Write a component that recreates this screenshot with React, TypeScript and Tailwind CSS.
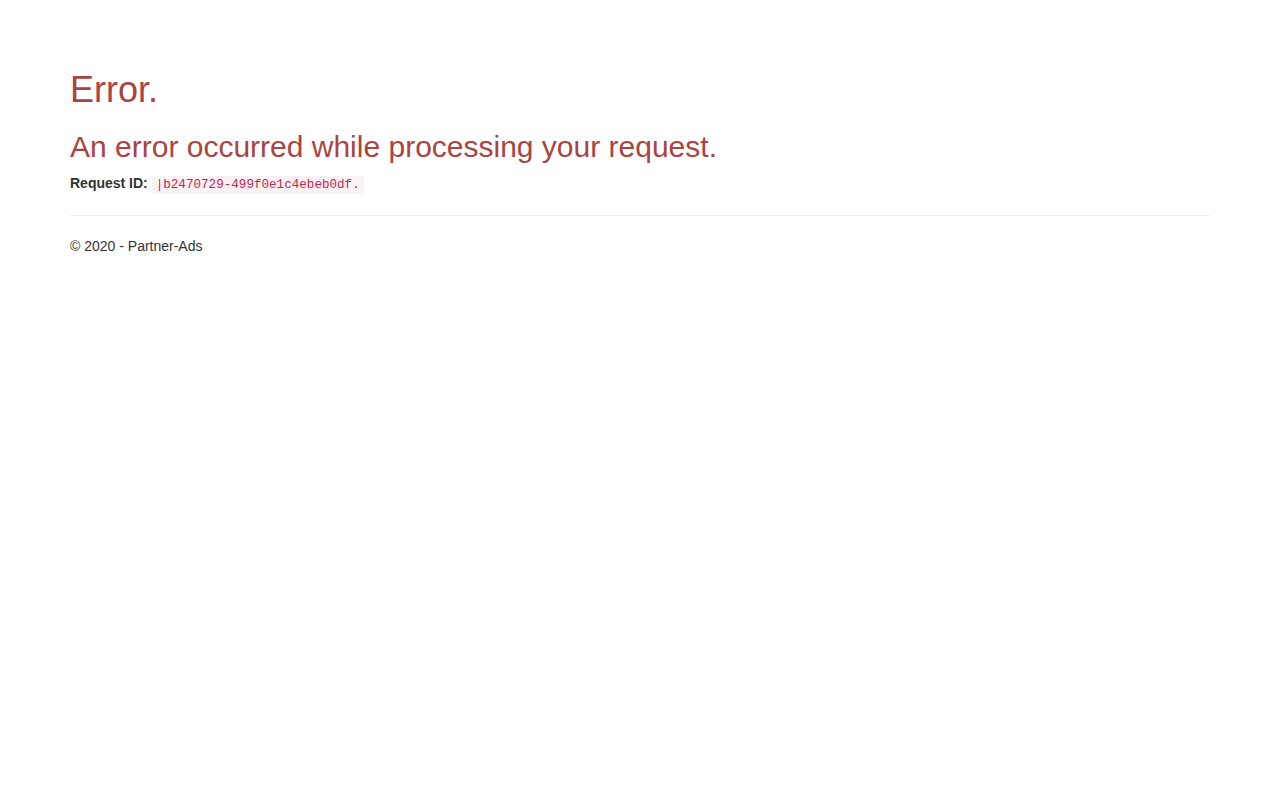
export default function App() {
    const requestId = "|b2470729-499f0e1c4ebeb0df.";

    return (
        <div className="min-h-screen bg-white pt-[50px] text-[14px] leading-[1.42857] text-[#333] font-['Helvetica_Neue','Liberation_Sans',Arial,sans-serif]">
            <div className="w-[1170px] mx-auto px-[15px]">
                <h1 className="mt-5 text-[36px] leading-[1.1] font-medium text-[#a94442]">Error.</h1>
                <h2 className="mt-5 text-[30px] leading-[1.1] font-medium text-[#a94442]">
                    An error occurred while processing your request.
                </h2>

                <p className="mt-[11px]">
                    <strong>Request ID:</strong>{" "}
                    <code className="px-1 py-0.5 text-[12.6px] text-[#c7254e] bg-[#f9f2f4] rounded font-['Liberation_Mono',monospace]">
                        {requestId}
                    </code>
                </p>

                <hr className="mt-5 mb-[21px] border-0 border-t border-[#eee]" />

                <footer>
                    <p>&copy; 2020 - Partner-Ads</p>
                </footer>
            </div>
        </div>
    );
}
